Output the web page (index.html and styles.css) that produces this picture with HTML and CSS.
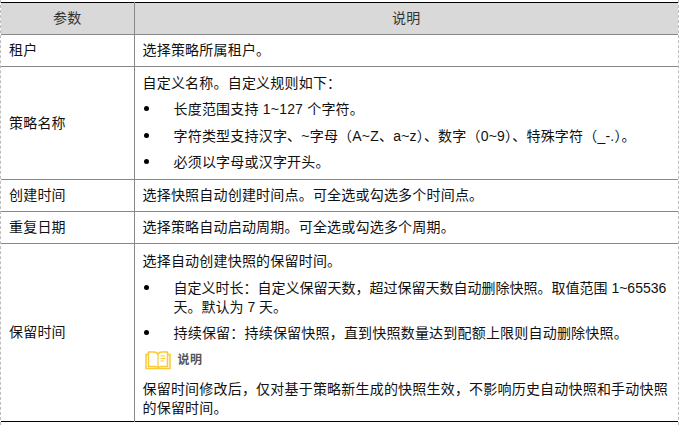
FILE: index.html
```html
<!DOCTYPE html>
<html lang="zh-CN">
<head>
<meta charset="utf-8">
<title>参数说明</title>
<link rel="stylesheet" href="styles.css">
</head>
<body>
<div class="page">
<table class="params">
  <colgroup><col class="col-name"><col class="col-desc"></colgroup>
  <thead>
    <tr class="row-head"><th>参数</th><th>说明</th></tr>
  </thead>
  <tbody>
    <tr class="row-single"><td>租户</td><td>选择策略所属租户。</td></tr>
    <tr class="row-name">
      <td>策略名称</td>
      <td>
        <p>自定义名称。自定义规则如下：</p>
        <ul>
          <li><span class="dot"></span><span>长度范围支持 1~127 个字符。</span></li>
          <li><span class="dot"></span><span>字符类型支持汉字、~字母（A~Z、a~z）、数字（0~9）、特殊字符（_-.）。</span></li>
          <li><span class="dot"></span><span>必须以字母或汉字开头。</span></li>
        </ul>
      </td>
    </tr>
    <tr class="row-single"><td>创建时间</td><td>选择快照自动创建时间点。可全选或勾选多个时间点。</td></tr>
    <tr class="row-single"><td>重复日期</td><td>选择策略自动启动周期。可全选或勾选多个周期。</td></tr>
    <tr class="row-keep">
      <td>保留时间</td>
      <td class="keep-desc">
        <p>选择自动创建快照的保留时间。</p>
        <ul>
          <li class="tight"><span class="dot"></span><span>自定义时长：自定义保留天数，超过保留天数自动删除快照。取值范围 1~65536 天。默认为 7 天。</span></li>
          <li><span class="dot"></span><span>持续保留：持续保留快照，直到快照数量达到配额上限则自动删除快照。</span></li>
        </ul>
        <div class="note-head">
          <svg class="note-icon" width="26" height="19" viewBox="0 0 26 19" fill="none" stroke="#fbc935" stroke-width="1.5">
            <path d="M3 3.5H1V17.5H25V3.5H23"/>
            <path d="M3.5 1H9C11 1 12.3 1.8 13 3C13.7 1.8 15 1 17 1H22.5V15.5H16C14.6 15.5 13.6 16 13 16.8C12.4 16 11.4 15.5 10 15.5H3.5Z"/>
            <path d="M13 3V16.5" stroke-width="1.2"/>
            <path d="M15.5 5H20M15.5 7.5H20M15.5 10H19" stroke-width="1"/>
          </svg>
          <span class="note-label">说明</span>
        </div>
        <p class="note-text">保留时间修改后，仅对基于策略新生成的快照生效，不影响历史自动快照和手动快照的保留时间。</p>
      </td>
    </tr>
  </tbody>
</table>
</div>
</body>
</html>
```
FILE: styles.css
```css
html, body {
  margin: 0;
  padding: 0;
  background: #fff;
}
.page {
  width: 679px;
  height: 425px;
  box-sizing: border-box;
  padding-top: 2px;
  border-left: 1px dashed #bdbdbd;
  border-right: 1px dashed #bdbdbd;
  font-family: "Liberation Sans", "Noto Sans CJK SC", sans-serif;
  font-size: 14px;
  line-height: 19px;
  letter-spacing: 0.2px;
  color: #111;
}
.params {
  width: 677px;
  table-layout: fixed;
  border-collapse: collapse;
  border-top: 1px solid #000;
  border-bottom: 1px solid #000;
}
.col-name { width: 133px; }
th, td {
  padding: 0 8px;
  vertical-align: middle;
  text-align: left;
  border-bottom: 1px solid #888;
  border-right: 1px solid #888;
}
th:last-child, td:last-child { border-right: 0; }
td:last-child { padding-right: 4px; }
tbody tr:last-child td { border-bottom: 0; }
th {
  background: #d9d9d9;
  color: #333;
  font-weight: normal;
  text-align: center;
}
.row-head { height: 32px; }
.row-single { height: 32px; }
.row-name { height: 113px; }
.row-keep { height: 178px; }
td.keep-desc {
  vertical-align: top;
  padding-top: 8px;
}
p { margin: 0; }
ul {
  list-style: none;
  margin: 0;
  padding: 0;
}
li {
  display: grid;
  grid-template-columns: 31px 1fr;
  margin-top: 7.5px;
}
.tight { letter-spacing: 0; }
.dot {
  width: 5px;
  height: 5px;
  margin: 6px 0 0 1px;
  border-radius: 50%;
  background: #000;
}
.note-head {
  display: flex;
  align-items: center;
  gap: 7px;
  margin-top: 7.5px;
  margin-left: 2px;
  height: 19px;
}
.note-icon { flex: none; }
.note-label {
  font-size: 12px;
  font-weight: bold;
  color: #555;
  letter-spacing: 0.5px;
}
.note-text { margin-top: 10.5px; }
```
